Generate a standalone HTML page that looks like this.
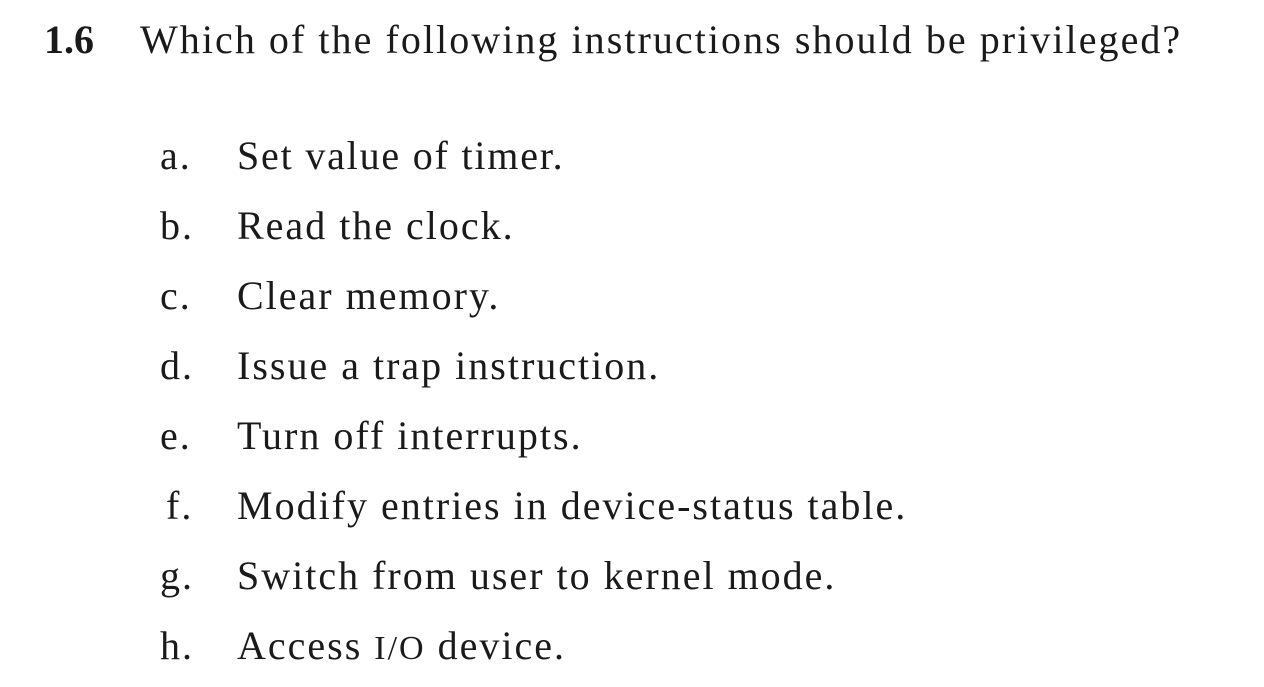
<!DOCTYPE html>
<html><head><meta charset="utf-8"><style>
html,body{margin:0;padding:0;background:#fff;width:1264px;height:687px;overflow:hidden}
body{font-family:"Liberation Serif",serif;color:#1a1a1a;position:relative}
.l{position:absolute;font-size:40px;line-height:40px;white-space:nowrap;letter-spacing:2px}
.b{font-weight:bold;letter-spacing:0}
</style></head><body>
<div class="l b" style="left:44px;top:20px">1.6</div>
<div class="l" style="left:140px;top:20px;letter-spacing:2.05px">Which of the following instructions should be privileged?</div>
<div class="l" style="left:160px;top:136px">a.</div><div class="l" style="left:237px;top:136px;letter-spacing:1.8px">Set value of timer.</div>
<div class="l" style="left:160px;top:206px">b.</div><div class="l" style="left:237px;top:206px">Read the clock.</div>
<div class="l" style="left:160px;top:276px">c.</div><div class="l" style="left:237px;top:276px">Clear memory.</div>
<div class="l" style="left:160px;top:346px">d.</div><div class="l" style="left:237px;top:346px">Issue a trap instruction.</div>
<div class="l" style="left:160px;top:416px">e.</div><div class="l" style="left:237px;top:416px">Turn off interrupts.</div>
<div class="l" style="left:166px;top:486px">f.</div><div class="l" style="left:237px;top:486px">Modify entries in device-status table.</div>
<div class="l" style="left:160px;top:556px">g.</div><div class="l" style="left:237px;top:556px">Switch from user to kernel mode.</div>
<div class="l" style="left:160px;top:626px">h.</div><div class="l" style="left:237px;top:626px">Access <span style="font-size:34px">I/O</span> device.</div>
</body></html>
